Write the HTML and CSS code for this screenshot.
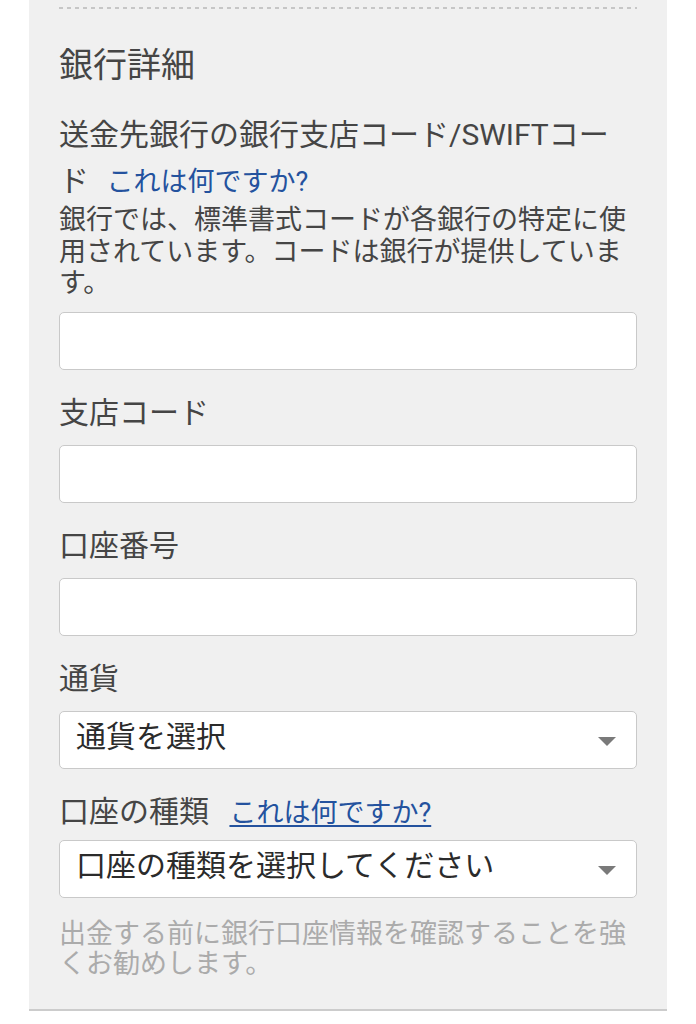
FILE: index.html
```html
<!DOCTYPE html>
<html lang="ja">
<head>
<meta charset="utf-8">
<title>銀行詳細</title>
<link rel="stylesheet" href="styles.css">
</head>
<body>
<div class="panel">
  <div class="dashes"></div>
  <h2 class="heading">銀行詳細</h2>

  <div class="field first">
    <div class="label">送金先銀行の銀行支店コード/SWIFTコード <a class="help">これは何ですか?</a></div>
    <p class="desc">銀行では、標準書式コードが各銀行の特定に使用されています。コードは銀行が提供しています。</p>
    <div class="input"></div>
  </div>

  <div class="field">
    <div class="label">支店コード</div>
    <div class="input"></div>
  </div>

  <div class="field">
    <div class="label">口座番号</div>
    <div class="input"></div>
  </div>

  <div class="field">
    <div class="label">通貨</div>
    <div class="select">
      <span class="select-text">通貨を選択</span>
      <svg class="arrow" width="18" height="9" viewBox="0 0 18 9"><path d="M0 0H18L9 9Z" fill="#7a7a7a"/></svg>
    </div>
  </div>

  <div class="field">
    <div class="label tight">口座の種類 <a class="help underline">これは何ですか?</a></div>
    <div class="select">
      <span class="select-text">口座の種類を選択してください</span>
      <svg class="arrow" width="18" height="9" viewBox="0 0 18 9"><path d="M0 0H18L9 9Z" fill="#7a7a7a"/></svg>
    </div>
  </div>

  <p class="note">出金する前に銀行口座情報を確認することを強くお勧めします。</p>
</div>
</body>
</html>
```

FILE: styles.css
```css
html, body {
  margin: 0;
  padding: 0;
  background: #ffffff;
}

body {
  font-family: Roboto, "Noto Sans CJK JP", sans-serif;
  color: #454545;
}

.panel {
  margin: 0 29px;
  width: 638px;
  box-sizing: border-box;
  background: #f0f0f0;
  padding: 7px 30px 30px;
  border-bottom: 2px solid #cccccc;
}

.dashes {
  height: 2px;
  background: repeating-linear-gradient(to right, #c6c6c6 0 4px, transparent 4px 8px);
}

.heading {
  margin: 36px 0 0;
  font-size: 34px;
  line-height: 40px;
  font-weight: normal;
  color: #454545;
}

.field {
  margin-top: 20px;
}

.field.first {
  margin-top: 27px;
}

.label {
  font-size: 30px;
  line-height: 46px;
  margin-bottom: 9px;
}

.label.tight {
  margin-top: 2px;
  margin-bottom: 4px;
}

.first .label {
  margin-bottom: 0;
}

.help {
  font-size: 27px;
  color: #24529e;
  margin-left: 10px;
  text-decoration: none;
}

.help.underline {
  margin-left: 13px;
  text-decoration: underline;
  text-underline-offset: 3px;
}

.desc {
  margin: 0 0 12px;
  font-size: 27px;
  line-height: 31.5px;
}

.input {
  height: 58px;
  box-sizing: border-box;
  background: #ffffff;
  border: 1px solid #c9c9c9;
  border-radius: 5px;
}

.select {
  height: 58px;
  box-sizing: border-box;
  background: #ffffff;
  border: 1px solid #c9c9c9;
  border-radius: 5px;
  display: flex;
  align-items: center;
  justify-content: space-between;
  padding: 0 20px 0 16px;
}

.select-text {
  font-size: 30px;
  line-height: 40px;
  color: #2b2b2b;
  margin-top: -6px;
}

.arrow {
  display: block;
  margin-top: 4px;
}

.note {
  margin: 21px 0 0;
  font-size: 27px;
  line-height: 30px;
  color: #ababab;
}
```
